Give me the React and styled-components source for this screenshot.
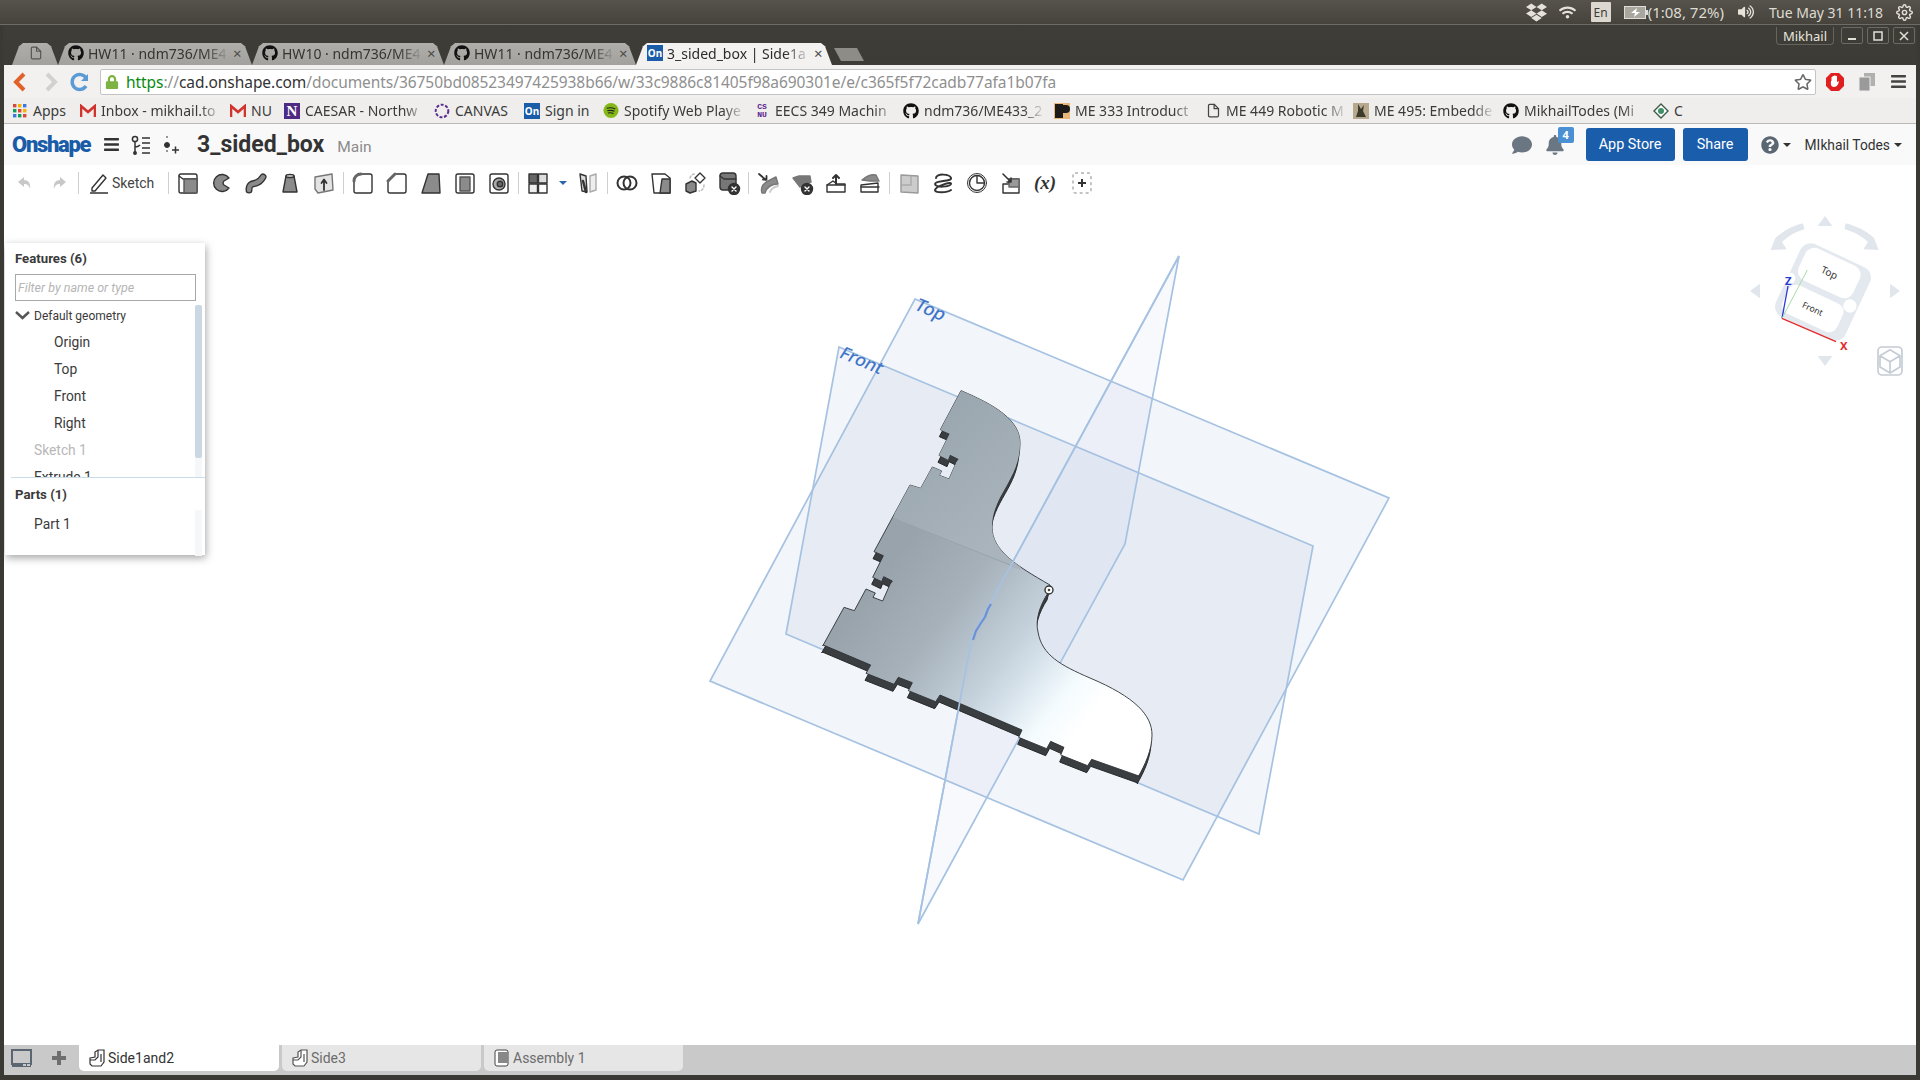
import React from 'react';
import styled, { createGlobalStyle } from 'styled-components';
import { FaGithub, FaDropbox, FaWifi, FaVolumeUp, FaRegStar, FaBars, FaBell, FaComment, FaQuestionCircle, FaLock } from 'react-icons/fa';
import { FiFile, FiSettings } from 'react-icons/fi';

const Global = createGlobalStyle`
  html, body { margin: 0; padding: 0; background: #3c3b37; }
  * { box-sizing: border-box; }
`;

const Screen = styled.div`
  width: 1920px;
  height: 1080px;
  display: flex;
  flex-direction: column;
  overflow: hidden;
  background: #3a3934;
  font-family: "Noto Sans", "Open Sans", sans-serif;
`;

/* ---- desktop top bar ---- */
const OsBar = styled.div`
  height: 25px;
  flex: none;
  display: flex;
  align-items: center;
  justify-content: flex-end;
  background: linear-gradient(#55534b, #45433c);
  border-bottom: 1px solid #6e6c64;
  color: #dfdbd2;
  font-size: 14px;
  padding-right: 6px;
`;
const OsIcon = styled.span`
  display: flex;
  align-items: center;
  justify-content: center;
  width: ${p => p.$w}px;
  margin-left: ${p => p.$ml || 0}px;
  color: #e6e2da;
`;
const LangBox = styled.span`
  width: 20px;
  height: 20px;
  margin-left: 12px;
  background: #dcd8cf;
  color: #3c3b37;
  font-size: 12px;
  display: flex;
  align-items: center;
  justify-content: center;
  border-radius: 1px;
`;
const OsText = styled.span`
  margin-left: ${p => p.$ml}px;
  font-size: ${p => p.$size || 14}px;
  white-space: nowrap;
`;

/* ---- window title + tabs ---- */
const TitleArea = styled.div`
  height: 40px;
  flex: none;
  position: relative;
  display: flex;
  align-items: flex-end;
  padding-left: 9px;
  background: linear-gradient(#3e3d38, #3c3b36);
  margin: 0 3px;
`;
const Tab = styled.div`
  width: ${p => p.$w}px;
  height: 22px;
  flex: none;
  display: flex;
  align-items: center;
  padding-left: ${p => p.$pl || 12}px;
  padding-bottom: 2px;
  gap: 4px;
  font-size: 14px;
  color: ${p => (p.$active ? '#2b2b2b' : '#35342f')};
  background: ${p => (p.$active ? '#f3f2f0' : 'linear-gradient(#b0aeaa, #a3a19d)')};
  clip-path: polygon(0 100%, 7px 15%, 11px 0, calc(100% - 11px) 0, calc(100% - 7px) 15%, 100% 100%);
`;
const NewTab = styled.div`
  width: 30px;
  height: 13px;
  margin: 0 0 4px 2px;
  flex: none;
  background: #8e8c87;
  clip-path: polygon(0 0, calc(100% - 7px) 0, 100% 100%, 7px 100%);
`;
const Fade = styled.span`
  width: ${p => p.$w}px;
  white-space: nowrap;
  flex: none;
  -webkit-mask-image: linear-gradient(90deg, #000 84%, rgba(0, 0, 0, 0.15) 100%);
  mask-image: linear-gradient(90deg, #000 84%, rgba(0, 0, 0, 0.15) 100%);
`;
const TabClose = styled.span`
  font-size: 15px;
  color: #4c4b47;
  margin-left: 3px;
`;
const WinControls = styled.div`
  position: absolute;
  top: 2px;
  right: 2px;
  display: flex;
  gap: 4px;
`;
const UserChip = styled.div`
  width: 58px;
  height: 18px;
  margin-right: 3px;
  border: 1px solid #66645c;
  border-top: none;
  border-radius: 0 0 4px 4px;
  color: #e8e5dd;
  font-size: 13px;
  display: flex;
  align-items: center;
  justify-content: center;
`;
const WinButton = styled.div`
  width: 22px;
  height: 17px;
  border: 1px solid #6c6a62;
  border-radius: 2px;
  color: #e2dfd7;
  display: flex;
  align-items: center;
  justify-content: center;
`;

/* ---- browser ---- */
const Browser = styled.div`
  flex: 1;
  min-height: 0;
  display: flex;
  flex-direction: column;
  margin: 0 4px 5px;
  background: #fff;
`;
const ChromeBar = styled.div`
  height: 33px;
  flex: none;
  display: flex;
  align-items: center;
  background: #f2f1ef;
  position: relative;
`;
const NavSlot = styled.div`
  width: ${p => p.$w}px;
  flex: none;
  display: flex;
  align-items: center;
  justify-content: center;
`;
const Address = styled.div`
  width: 1716px;
  height: 26px;
  flex: none;
  margin-left: 7px;
  background: #fff;
  border: 1px solid #c4c4c4;
  border-radius: 2px;
  display: flex;
  align-items: center;
  font-family: "Noto Sans", sans-serif;
  font-size: 15.5px;
  letter-spacing: -0.06px;
  position: relative;
`;
const Url = styled.span`
  margin-left: 3px;
  color: #8f8f8f;
  white-space: nowrap;
`;
const UrlGreen = styled.span`
  color: #0a8a12;
`;
const UrlHost = styled.span`
  color: #333;
`;
const StarSlot = styled.div`
  position: absolute;
  right: 3px;
  top: 3px;
  color: #666;
  display: flex;
`;
const LockSlot = styled.div`
  width: 22px;
  flex: none;
  display: flex;
  justify-content: center;
  color: #7cb342;
`;
const Bookmarks = styled.div`
  height: 26px;
  flex: none;
  display: flex;
  align-items: center;
  background: #efeeec;
  border-bottom: 1px solid #b9b9b7;
  padding-left: 8px;
`;
const Bookmark = styled.div`
  width: ${p => p.$w}px;
  flex: none;
  display: flex;
  align-items: center;
  gap: 5px;
  font-size: 14px;
  color: #3b3b3b;
`;
const FavSlot = styled.span`
  width: 16px;
  height: 16px;
  flex: none;
  display: flex;
  align-items: center;
  justify-content: center;
`;
const OnBadge = styled.span`
  width: 16px;
  height: 16px;
  background: #1a5ca8;
  color: #fff;
  font-size: 10px;
  font-weight: 700;
  display: flex;
  align-items: center;
  justify-content: center;
`;
const NBadge = styled.span`
  width: 16px;
  height: 16px;
  background: #4e2a84;
  color: #fff;
  font-family: "Liberation Serif", serif;
  font-size: 15px;
  font-weight: 700;
  line-height: 16px;
  text-align: center;
`;
const CsBadge = styled.span`
  font-family: "Liberation Mono", monospace;
  font-size: 8px;
  line-height: 8px;
  font-weight: 700;
  color: #5a1f8c;
  text-align: center;
`;

/* ---- onshape header ---- */
const Header = styled.div`
  height: 41px;
  flex: none;
  display: flex;
  align-items: center;
  background: #f9f9f9;
  padding-left: 8px;
`;
const Logo = styled.span`
  width: 84px;
  flex: none;
  font-family: "Roboto", sans-serif;
  font-weight: 900;
  font-size: 22px;
  letter-spacing: -1.3px;
  color: #1a5ca8;
`;
const HeadIcon = styled.span`
  width: 30px;
  flex: none;
  display: flex;
  justify-content: center;
  color: #333;
`;
const DocTitle = styled.span`
  margin-left: 11px;
  font-family: "Roboto", sans-serif;
  font-weight: 700;
  font-size: 23px;
  color: #333;
`;
const Branch = styled.span`
  margin-left: 13px;
  font-family: "Roboto", sans-serif;
  font-size: 15.5px;
  color: #8b8b8b;
  padding-top: 5px;
`;
const HeadRight = styled.div`
  margin-left: auto;
  display: flex;
  align-items: center;
  height: 100%;
`;
const Bell = styled.span`
  position: relative;
  display: flex;
  color: #6a7682;
  margin-left: 13px;
`;
const BellBadge = styled.span`
  position: absolute;
  top: -8px;
  left: 13px;
  width: 16px;
  height: 16px;
  background: #4a90d2;
  border-radius: 2px;
  color: #fff;
  font-size: 11px;
  font-weight: 700;
  display: flex;
  align-items: center;
  justify-content: center;
`;
const Blue = styled.div`
  width: ${p => p.$w}px;
  height: 33px;
  margin-left: ${p => p.$ml}px;
  background: #1a5dab;
  border-radius: 3px;
  color: #fff;
  font-family: "Roboto", sans-serif;
  font-size: 14.4px;
  display: flex;
  align-items: center;
  justify-content: center;
`;
const Caret = styled.span`
  width: 0;
  height: 0;
  margin-left: ${p => p.$ml}px;
  border-left: 4px solid transparent;
  border-right: 4px solid transparent;
  border-top: 4px solid ${p => p.$c || '#333'};
`;
const UserName = styled.span`
  margin-left: 14px;
  font-family: "Roboto", sans-serif;
  font-size: 13.8px;
  color: #333;
`;

/* ---- toolbar ---- */
const Toolbar = styled.div`
  height: 36px;
  flex: none;
  display: flex;
  align-items: center;
  background: #fff;
  padding-left: 4px;
`;
const ToolButton = styled.div`
  width: ${p => p.$w || 34}px;
  height: 30px;
  flex: none;
  display: flex;
  align-items: center;
  justify-content: center;
`;
const ToolSep = styled.div`
  width: 1px;
  height: 22px;
  margin: 0 2px;
  flex: none;
  background: #cfcfcf;
`;
const SketchLabel = styled.div`
  display: flex;
  width: 85px;
  padding-left: 8px;
  flex: none;
  align-items: center;
  gap: 3px;
  font-family: "Roboto", sans-serif;
  font-size: 14px;
  color: #444;
`;
const VarLabel = styled.span`
  font-family: "Liberation Serif", serif;
  font-weight: 700;
  font-size: 19px;
  color: #333;
`;

/* ---- viewport ---- */
const Viewport = styled.div`
  flex: 1;
  min-height: 0;
  position: relative;
  background: #fff;
  overflow: hidden;
`;
const Scene = styled.svg`
  position: absolute;
  inset: 0;
`;
const CubeNav = styled.svg`
  position: absolute;
  top: -1px;
  right: -4px;
`;
const Panel = styled.div`
  position: absolute;
  left: 1px;
  top: 42px;
  width: 200px;
  height: 312px;
  background: #fff;
  box-shadow: 1px 3px 8px rgba(0, 0, 0, 0.35);
  font-family: "Roboto", sans-serif;
  color: #333;
  display: flex;
  flex-direction: column;
`;
const PanelHead = styled.div`
  font-size: 13.2px;
  font-weight: 700;
  color: #3a3a3a;
  height: ${p => p.$h}px;
  padding: ${p => p.$pt}px 0 0 10px;
  flex: none;
`;
const Filter = styled.div`
  width: 181px;
  height: 27px;
  margin-left: 10px;
  flex: none;
  border: 1px solid #a8a8a8;
  font-size: 12.5px;
  font-style: italic;
  color: #b5b5b5;
  display: flex;
  align-items: center;
  padding-left: 2px;
`;
const List = styled.div`
  position: relative;
  height: ${p => p.$h}px;
  flex: none;
  overflow: hidden;
  border-bottom: ${p => (p.$line ? '1px solid #c8dcea' : 'none')};
  margin-left: ${p => (p.$line ? 6 : 0)}px;
`;
const Track = styled.div`
  position: absolute;
  right: 3px;
  top: ${p => p.$top}px;
  bottom: 0;
  width: 7px;
  background: #f5f7f9;
`;
const Thumb = styled.div`
  height: 153px;
  width: 7px;
  background: #cbd8e4;
  border-radius: 2px;
`;
const Row = styled.div`
  height: 27px;
  display: flex;
  align-items: center;
  padding-left: ${p => p.$indent}px;
  padding-top: ${p => p.$pt || 0}px;
  font-size: ${p => p.$size || 13.8}px;
  color: ${p => (p.$muted ? '#b8b8b8' : '#3a3a3a')};
`;
const Chevron = styled.svg`
  margin-right: 4px;
  flex: none;
`;

/* ---- bottom tabs ---- */
const BottomBar = styled.div`
  height: 30px;
  flex: none;
  display: flex;
  background: #c9c9c9;
  padding-bottom: 4px;
  font-family: "Roboto", sans-serif;
`;
const BottomTool = styled.div`
  width: ${p => p.$w}px;
  flex: none;
  display: flex;
  align-items: center;
  justify-content: center;
`;
const SheetTab = styled.div`
  width: ${p => p.$w}px;
  margin-right: 3px;
  flex: none;
  display: flex;
  align-items: center;
  gap: 3px;
  padding-left: 10px;
  font-size: 14px;
  border-radius: 0 0 5px 5px;
  color: ${p => (p.$active ? '#333' : '#6c6c6c')};
  background: ${p => (p.$active ? '#fff' : '#e6e6e6')};
`;

/* ---- small drawings ---- */
const Gh = ({ size = 16 }) => <FaGithub size={size} color="#111" />;

const OnLogo = () => <OnBadge>On</OnBadge>;

const GmailM = () => (
  <svg width="16" height="14" viewBox="0 0 16 14">
    <path d="M1 13V2l7 6 7-6v11" fill="none" stroke="#d0342c" strokeWidth="2.6" />
  </svg>
);

const CanvasRing = () => (
  <svg width="16" height="16" viewBox="0 0 16 16">
    <circle cx="8" cy="8" r="6.3" fill="none" stroke="#5c2d91" strokeWidth="2" strokeDasharray="3 1.6" />
  </svg>
);

const SpotifyDot = () => (
  <svg width="17" height="17" viewBox="0 0 17 17">
    <circle cx="8.5" cy="8.5" r="8" fill="#84b818" />
    <path d="M4 6.2c3-1 6-.8 9 .7M4.6 8.8c2.6-.8 5-.6 7.6.6M5.2 11.2c2-.6 4-.4 6 .6" fill="none" stroke="#222" strokeWidth="1.2" />
  </svg>
);

const AppsGrid = () => (
  <svg width="14" height="14" viewBox="0 0 14 14">
    {[0, 1, 2].map(r => [0, 1, 2].map(c => (
      <rect key={`${r}${c}`} x={c * 5} y={r * 5} width="3.4" height="3.4"
        fill={['#d9483b', '#f4b400', '#3b78e7', '#0f9d58', '#d9483b', '#f4b400', '#3b78e7', '#0f9d58', '#d9483b'][r * 3 + c]} />
    )))}
  </svg>
);

const Me333 = () => (
  <svg width="16" height="16" viewBox="0 0 16 16">
    <rect width="16" height="16" fill="#e9b777" />
    <rect x="1" y="1" width="8" height="14" fill="#1d1b19" />
    <path d="M9 2h3a4 4 0 010 8H9z" fill="#1d1b19" />
  </svg>
);

const Me495 = () => (
  <svg width="16" height="16" viewBox="0 0 16 16">
    <rect width="16" height="16" fill="#b6a98e" />
    <path d="M5 1l3 5 3-4-1 6 3 6H3l2-6z" fill="#3d3a2c" />
  </svg>
);

const Diamond = () => (
  <svg width="16" height="16" viewBox="0 0 16 16">
    <path d="M8 1l7 7-7 7-7-7z" fill="#fff" stroke="#3c5a48" strokeWidth="1.4" />
    <circle cx="8" cy="8" r="3" fill="#3f9268" />
  </svg>
);

const I = ({ children, size = 24 }) => (
  <svg width={size} height={size} viewBox="0 0 24 24" fill="none" stroke="#333" strokeWidth="1.4" strokeLinejoin="round" strokeLinecap="round">
    {children}
  </svg>
);
const G = '#8b8b8b';

const tools = {
  extrude: <I><rect x="3" y="3" width="18" height="19" rx="2" fill="#fff" /><path d="M3 5l4 3h14" /><rect x="8" y="8" width="13" height="14" fill={G} stroke="#555" /></I>,
  revolve: <I><path d="M19 7a8.5 8.5 0 100 10l-5-3a2.6 2.6 0 010-4z" fill={G} /></I>,
  sweep: <I><path d="M5 19c0-6 3-6 7-7s5-3 7-6" stroke="#333" strokeWidth="7" /><path d="M5 19c0-6 3-6 7-7s5-3 7-6" stroke={G} strokeWidth="4.4" /></I>,
  loft: <I><path d="M8 5L5 21h14L16 5z" fill={G} /><ellipse cx="12" cy="5" rx="4" ry="1.6" fill="#bbb" /></I>,
  enclose: <I><path d="M3 6l17-3 1 16-15 3-3-4z" fill="#e3e3e3" stroke="#777" /><path d="M12 19V9M9.5 12L12 8.5l2.500 3.500" strokeWidth="1.800" /></I>,
  fillet: <I><path d="M10 3h9a2 2 0 012 2v15a2 2 0 01-2 2H5a2 2 0 01-2-2V10a7 7 0 017-7z" fill="#fff" /><path d="M3 10a7 7 0 017-7" strokeWidth="3" stroke="#666" /></I>,
  chamfer: <I><path d="M10 3h9a2 2 0 012 2v15a2 2 0 01-2 2H5a2 2 0 01-2-2V10z" fill="#fff" /><path d="M3 10l7-7" strokeWidth="3" stroke="#666" /></I>,
  draft: <I><path d="M9 3h11l1 19H3z" fill={G} /></I>,
  shell: <I><rect x="3" y="3" width="18" height="19" rx="2" fill="#fff" /><rect x="7" y="6" width="10" height="14" fill={G} stroke="#555" /></I>,
  hole: <I><rect x="3" y="3" width="18" height="19" rx="2" fill="#fff" /><circle cx="12" cy="13" r="6" fill="#aaa" /><circle cx="13" cy="13" r="2.800" fill="#666" /></I>,
  pattern: <I><rect x="3" y="3" width="8.500" height="9" fill="#666" /><rect x="12.500" y="3" width="8.500" height="9" fill="#ddd" /><rect x="3" y="13" width="8.500" height="9" fill="#eee" /><rect x="12.500" y="13" width="8.500" height="9" fill="#fff" /></I>,
  mirror: <I><path d="M14 5l6-2v16l-6 2z" fill="#eee" stroke="#aaa" /><path d="M4 3l6 2 1 16-5-1z" fill="#ddd" /><path d="M7 10l3 11" strokeWidth="2.500" /></I>,
  boolean: <I><circle cx="9" cy="12" r="6.500" strokeWidth="2" /><circle cx="15" cy="12" r="6.500" strokeWidth="2" /></I>,
  split: <I><path d="M3 3h13l5 4v15H5z" fill="#fff" /><path d="M13 8h8v14h-10z" fill={G} /></I>,
  transform: <I><path d="M3 13l6-3 4 2v8l-6 2-4-2z" fill="#888" /><path d="M17 2l5 5-5 5-5-5z" fill="#fff" /><path d="M7 7c1-3 3-4 5-4M21 14c0 3-2 6-5 6" stroke="#bbb" strokeDasharray="2 2" /></I>,
  delPart: <I><rect x="3" y="2" width="16" height="17" rx="3" fill="#777" /><path d="M3 5l4 3h12" /><circle cx="17" cy="18" r="5.500" fill="#333" /><path d="M15 16l4 4M19 16l-4 4" stroke="#fff" /></I>,
  modify: <I><path d="M6 22c-2-6 2-11 8-13l6-3 2 7c-6 0-11 3-13 9z" fill={G} stroke="#777" /><path d="M3 3l7 6M7 8.500h3.500V5" strokeWidth="1.800" /><path d="M14 21c1-3 4-5 8-6" stroke="#ccc" strokeWidth="2" /></I>,
  delFace: <I><path d="M3 7l6-2 6 0 5 0 1 6-6 2-5 3z" fill="#777" stroke="#777" /><circle cx="17" cy="18" r="5.500" fill="#333" /><path d="M15 16l4 4M19 16l-4 4" stroke="#fff" /></I>,
  moveFace: <I><path d="M3 14l6-4 4 3h8v8H3z" fill="#fff" /><path d="M3 14h18" /><path d="M12 13V4M9 7l3-3 3 3" strokeWidth="2" /></I>,
  replace: <I><path d="M3 14l17-2v9H3z" fill="#fff" /><path d="M3 16h18" /><path d="M4 9c4-3 8-6 14-5l3 6-9 0z" fill={G} stroke="#777" /></I>,
  plane: <I><path d="M4 4l17 1v17L4 21z" fill="#ccc" stroke="#999" /><path d="M14 5v9l-10 0" stroke="#aaa" /></I>,
  helix: <I><path d="M5 7c0-5 14-4 15 0S4 9 4 13s15 3 16 0S5 15 4 19c0 3 12 3 16 0" strokeWidth="2" /></I>,
  clock: <I><circle cx="12" cy="12" r="9.500" strokeWidth="1" /><circle cx="12" cy="12" r="7.500" /><path d="M12 5v7h7" /></I>,
  wrap: <I><path d="M4 13h6V8h10v14H4z" fill="#fff" /><path d="M10 8h10v8H10z" fill="#999" stroke="#666" /><path d="M4 3l8 8M8 11h4V7" strokeWidth="1.600" /></I>,
};

const grp1 = ['extrude', 'revolve', 'sweep', 'loft', 'enclose'];
const grp2 = ['fillet', 'chamfer', 'draft', 'shell', 'hole'];
const grp4 = ['boolean', 'split', 'transform', 'delPart'];
const grp5 = ['modify', 'delFace', 'moveFace', 'replace'];
const grp6 = ['plane', 'helix', 'clock', 'wrap'];

const ToolGroup = ({ names }) => names.map(n => <ToolButton key={n}>{tools[n]}</ToolButton>);

const bookmarks = [
  { w: 68, icon: <AppsGrid />, text: 'Apps' },
  { w: 150, icon: <GmailM />, text: 'Inbox - mikhail.to', fade: 118 },
  { w: 54, icon: <GmailM />, text: 'NU' },
  { w: 150, icon: <NBadge>N</NBadge>, text: 'CAESAR - Northw', fade: 118 },
  { w: 90, icon: <CanvasRing />, text: 'CANVAS' },
  { w: 79, icon: <OnLogo />, text: 'Sign in' },
  { w: 151, icon: <SpotifyDot />, text: 'Spotify Web Playe', fade: 118 },
  { w: 149, icon: <CsBadge>CS<br />NU</CsBadge>, text: 'EECS 349 Machin', fade: 118 },
  { w: 151, icon: <Gh />, text: 'ndm736/ME433_2', fade: 118 },
  { w: 151, icon: <Me333 />, text: 'ME 333 Introduct', fade: 118 },
  { w: 148, icon: <FiFile size={15} color="#444" />, text: 'ME 449 Robotic M', fade: 118 },
  { w: 150, icon: <Me495 />, text: 'ME 495: Embedde', fade: 118 },
  { w: 150, icon: <Gh />, text: 'MikhailTodes (Mi', fade: 118 },
  { w: 40, icon: <Diamond />, text: 'C' },
];

const tabs = [
  { w: 194, text: 'HW11 · ndm736/ME4' },
  { w: 192, text: 'HW10 · ndm736/ME4' },
  { w: 192, text: 'HW11 · ndm736/ME4' },
];

/* ---- the part in the viewport, coordinates are page pixels ---- */
const z7 = ([x, y]) => `${800 + x / 3},${370 + y / 3}`;
const z8 = ([x, y]) => `${820 + x / 3},${600 + y / 3}`;

const leftEdge = [[68, 828], [132, 712], [163, 722], [198, 657], [226, 669], [219, 682], [248, 693], [270, 643], [277, 633], [251, 620], [245, 635], [218, 622], [250, 557], [222, 545], [330, 345], [362, 355], [397, 291], [425, 303], [418, 316], [447, 327], [469, 277], [476, 267], [450, 254], [444, 269], [417, 256], [449, 191], [421, 179], [483, 62]];
const bottomEdge = [[957, 528], [815, 478], [803, 497], [722, 465], [732, 442], [692, 424], [680, 446], [596, 412], [606, 390], [360, 285], [347, 305], [265, 272], [277, 248], [235, 232], [222, 253], [138, 220], [152, 195], [10, 135]];

const facePath = `M${leftEdge.map(z7).join(' L')} C995,405 1020,420 1020,443 C1020,480 992,495 992,527 C992,550 1015,565 1050,585 L1048,593 C1040,605 1035,620 1038,632 C1042,655 1060,665 1090,678 C1135,697 1152,715 1152,735 C1152,750 1145,765 1138,777 L${bottomEdge.map(z8).join(' L')} Z`;

const PlaneShape = ({ points, fill = 'rgba(170,190,215,0.15)' }) => (
  <polygon points={points} fill={fill} stroke="#a6c2e2" strokeWidth="1.700" />
);

const PartScene = () => (
  <Scene width="1912" height="844" viewBox="4 201 1912 844">
    <defs>
      <linearGradient id="faceFill" gradientUnits="userSpaceOnUse" x1="885" y1="570" x2="1085" y2="725">
        <stop offset="0" stopColor="#98a3ac" />
        <stop offset="0.3" stopColor="#a6b1ba" />
        <stop offset="0.59" stopColor="#c5d2dc" />
        <stop offset="0.74" stopColor="#dde8f0" />
        <stop offset="0.86" stopColor="#f4fbfe" />
        <stop offset="1" stopColor="#fff" />
      </linearGradient>
      <linearGradient id="upperFill" gradientUnits="userSpaceOnUse" x1="900" y1="420" x2="1000" y2="540">
        <stop offset="0" stopColor="#99a5ae" />
        <stop offset="1" stopColor="#a9b4bc" />
      </linearGradient>
      <clipPath id="faceClip"><path d={facePath} /></clipPath>
    </defs>
    <PlaneShape points="915,299 1389,498 1183,880 710,681" />
    <PlaneShape points="839,347 1313,546 1259,834 786,634" />
    <PlaneShape points="1179,256 1125,544 918,924 972,637" fill="rgba(170,180,225,0.08)" />
    <text transform="translate(913,309) rotate(22.800) skewX(-10)" fontFamily="Noto Sans, sans-serif" fontWeight="500" fontSize="18" fill="#3f74c8">Top</text>
    <text transform="translate(838,357) rotate(22.800) skewX(-10)" fontFamily="Noto Sans, sans-serif" fontWeight="500" fontSize="17.500" fill="#3f74c8">Front</text>
    <path d={facePath} transform="translate(-1,7)" fill="#3b3e41" stroke="#26282a" strokeWidth="1" />
    <path d={facePath} fill="url(#faceFill)" stroke="#2f3235" strokeWidth="0.900" />
    <g clipPath="url(#faceClip)">
      <polygon points="950,340 1060,340 1020,570 893,518" fill="url(#upperFill)" />
      <path d="M893,518L1010,565" stroke="#97a3ad" strokeWidth="1" />
    </g>
    <path d="M1179,256L972,637L918,924" fill="none" stroke="#a6c2e2" strokeWidth="1.700" />
    <path d="M973,640l3,-9l5,-8l4,-6l3,-8l3,-5" fill="none" stroke="#5b86d8" strokeWidth="2.200" opacity="0.8" />
    <circle cx="1049" cy="590" r="4" fill="#fff" stroke="#333" strokeWidth="1.400" />
    <circle cx="1049" cy="590" r="1.300" fill="#444" />
  </Scene>
);

const CubeWidget = () => (
  <CubeNav width="200" height="190" viewBox="0 0 600 570">
    <g fill="#e0e6ec">
      <path d="M315 48l22 30h-44zM315 498l22-30h-44zM90 273l30-22v44zM540 273l-30-22v44z" />
      <path d="M152 150l14-36c24-22 52-36 82-44l6 18c-28 8-48 20-68 38l14 22z" />
      <path d="M476 150l-14-36c-24-22-52-36-86-44l-2 18c28 8 50 20 70 38l-14 22z" />
    </g>
    <g transform="translate(-6,6) rotate(25 315 270)">
      <rect x="200" y="150" width="230" height="240" rx="34" fill="#e4e9ef" />
      <rect x="218" y="158" width="180" height="105" rx="30" fill="#fff" />
      <rect x="218" y="282" width="180" height="92" rx="26" fill="#fff" />
      <circle cx="406" cy="274" r="20" fill="#fff" />
      <circle cx="208" cy="274" r="16" fill="#fff" />
      <text x="308" y="220" textAnchor="middle" fontFamily="Noto Sans, sans-serif" fontSize="30" fill="#333">Top</text>
      <text x="308" y="338" textAnchor="middle" fontFamily="Noto Sans, sans-serif" fontSize="26" fill="#333">Front</text>
    </g>
    <path d="M186 355L204 258" stroke="#2d3bd6" strokeWidth="4" />
    <path d="M186 355L262 210" stroke="#a7dca9" strokeWidth="3" />
    <path d="M186 355L348 425" stroke="#e02c2c" strokeWidth="4" />
    <text x="195" y="254" fontFamily="Noto Sans, sans-serif" fontWeight="700" fontSize="34" fill="#2d3bd6">Z</text>
    <text x="360" y="450" fontFamily="Noto Sans, sans-serif" fontWeight="700" fontSize="34" fill="#e02c2c">X</text>
    <g fill="none" stroke="#c5ccd5" strokeWidth="5" strokeLinejoin="round">
      <rect x="474" y="441" width="72" height="84" rx="12" />
      <path d="M510 449l30 18v34l-30 18-30-18v-34zM480 467l30 18 30-18M510 485v34" />
    </g>
  </CubeNav>
);

const PartGlyph = ({ muted }) => (
  <svg width="16" height="18" viewBox="0 0 16 18" fill="#fff" stroke={muted ? '#555' : '#333'} strokeWidth="1.200">
    <path d="M1 9l5-1V3l3-2h6v12l-3 4H3l-2-2z" />
    <path d="M9 1v7L6 11H1M12 13V5" fill="none" />
  </svg>
);

const App = () => (
  <Screen>
    <Global />
    <OsBar>
      <OsIcon $w={24}><FaDropbox size={21} /></OsIcon>
      <OsIcon $w={22} $ml={8}><FaWifi size={17} /></OsIcon>
      <LangBox>En</LangBox>
      <OsIcon $w={24} $ml={13}>
        <svg width="24" height="13" viewBox="0 0 24 13">
          <rect x="0.500" y="0.500" width="21" height="12" fill="#a9a69e" stroke="#ddd" />
          <rect x="22" y="4" width="2" height="5" fill="#ddd" />
          <path d="M13 2L7 7h4l-1 4 6-5h-4z" fill="#fff" />
        </svg>
      </OsIcon>
      <OsText $ml={0} $size={15}>(1:08, 72%)</OsText>
      <OsIcon $w={20} $ml={12}><FaVolumeUp size={16} /></OsIcon>
      <OsText $ml={13}>Tue May 31 11:18</OsText>
      <OsIcon $w={20} $ml={11}><FiSettings size={17} /></OsIcon>
    </OsBar>
    <TitleArea>
      <Tab $w={46} $pl={17}><FiFile size={14} color="#555" /></Tab>
      {tabs.map((t, i) => (
        <Tab key={i} $w={t.w} $pl={10}>
          <Gh />
          <Fade $w={138}>{t.text}</Fade>
          <TabClose>×</TabClose>
        </Tab>
      ))}
      <Tab $w={196} $active $pl={11}>
        <OnLogo />
        <Fade $w={140}>3_sided_box | Side1a</Fade>
        <TabClose>×</TabClose>
      </Tab>
      <NewTab />
      <WinControls>
        <UserChip>Mikhail</UserChip>
        <WinButton><svg width="10" height="10"><path d="M1 8h8" stroke="#e2dfd7" strokeWidth="2" /></svg></WinButton>
        <WinButton><svg width="10" height="10"><rect x="1" y="1" width="8" height="8" fill="none" stroke="#e2dfd7" strokeWidth="1.500" /></svg></WinButton>
        <WinButton><svg width="10" height="10"><path d="M1 1l8 8M9 1l-8 8" stroke="#e2dfd7" strokeWidth="1.500" /></svg></WinButton>
      </WinControls>
    </TitleArea>
    <Browser>
      <ChromeBar>
        <NavSlot $w={32}>
          <svg width="14" height="20" viewBox="0 0 14 20"><path d="M11 2L3 10l8 8" fill="none" stroke="#e0622a" strokeWidth="4" /></svg>
        </NavSlot>
        <NavSlot $w={30}>
          <svg width="14" height="20" viewBox="0 0 14 20"><path d="M3 2l8 8-8 8" fill="none" stroke="#d3d1ce" strokeWidth="4" /></svg>
        </NavSlot>
        <NavSlot $w={27}>
          <svg width="20" height="20" viewBox="0 0 20 20">
            <path d="M16 6a7.500 7.500 0 100 8" fill="none" stroke="#5b9bd5" strokeWidth="3.400" />
            <path d="M18 2v7h-7z" fill="#5b9bd5" />
          </svg>
        </NavSlot>
        <Address>
          <LockSlot><FaLock size={14} /></LockSlot>
          <Url>
            <UrlGreen>https</UrlGreen>://<UrlHost>cad.onshape.com</UrlHost>/documents/36750bd08523497425938b66/w/33c9886c81405f98a690301e/e/c365f5f72cadb77afa1b07fa
          </Url>
          <StarSlot><FaRegStar size={18} /></StarSlot>
        </Address>
        <NavSlot $w={38}>
          <svg width="20" height="20" viewBox="0 0 20 20">
            <path d="M6 1h8l5 5v8l-5 5H6l-5-5V6z" fill="#e02020" />
            <path d="M6.500 9V5h1v4-5h1.500v5-5.500h1.500V9 4h1.500v6c1 0 1.500-1 2-1-.5 3-2 6-5 6-3 0-3.500-3-3-6z" fill="#fff" />
          </svg>
        </NavSlot>
        <NavSlot $w={26}>
          <svg width="18" height="20" viewBox="0 0 18 20"><rect x="6" y="1" width="11" height="13" fill="#b0b0b0" /><rect x="1" y="5" width="11" height="14" fill="#9a9a9a" stroke="#eee" /></svg>
        </NavSlot>
        <NavSlot $w={36}><FaBars size={17} color="#444" /></NavSlot>
      </ChromeBar>
      <Bookmarks>
        {bookmarks.map(b => (
          <Bookmark key={b.text} $w={b.w}>
            <FavSlot>{b.icon}</FavSlot>
            {b.fade ? <Fade $w={b.fade}>{b.text}</Fade> : <span>{b.text}</span>}
          </Bookmark>
        ))}
      </Bookmarks>
      <Header>
        <Logo>Onshape</Logo>
        <HeadIcon><FaBars size={17} /></HeadIcon>
        <HeadIcon>
          <svg width="20" height="20" viewBox="0 0 20 20" fill="none" stroke="#333" strokeWidth="1.500">
            <circle cx="4" cy="4" r="2.600" /><path d="M4 7v10M4 12c3 0 4-1 5-2" /><circle cx="4" cy="18" r="1.200" fill="#333" />
            <path d="M11 3h8M11 8h8M11 13h8M11 18h8" />
          </svg>
        </HeadIcon>
        <HeadIcon>
          <svg width="20" height="20" viewBox="0 0 20 20" fill="#333" stroke="#333">
            <circle cx="6" cy="10" r="2.500" /><path d="M6 1v4M6 15v4" strokeDasharray="2 2" fill="none" /><path d="M11 15h7M14.500 11.500v7" fill="none" strokeWidth="1.500" />
          </svg>
        </HeadIcon>
        <DocTitle>3_sided_box</DocTitle>
        <Branch>Main</Branch>
        <HeadRight>
          <FaComment size={20} color="#6a7682" />
          <Bell><FaBell size={20} /><BellBadge>4</BellBadge></Bell>
          <Blue $w={89} $ml={21}>App Store</Blue>
          <Blue $w={65} $ml={8}>Share</Blue>
          <OsIcon $w={20} $ml={12}><FaQuestionCircle size={18} color="#5a6672" /></OsIcon>
          <Caret $ml={3} />
          <UserName>MIkhail Todes</UserName>
          <Caret $ml={4} />
          <OsIcon $w={14} />
        </HeadRight>
      </Header>
      <Toolbar>
        <ToolButton>
          <svg width="16" height="16" viewBox="0 0 16 16"><path d="M7 2L1 7l6 5V9c3 0 5 1 6 5 1-6-2-9-6-9z" fill="#c8c8c8" /></svg>
        </ToolButton>
        <ToolButton>
          <svg width="16" height="16" viewBox="0 0 16 16"><path d="M9 2l6 5-6 5V9c-3 0-5 1-6 5-1-6 2-9 6-9z" fill="#c8c8c8" /></svg>
        </ToolButton>
        <ToolSep />
        <SketchLabel>
          <svg width="20" height="22" viewBox="0 0 20 22" fill="none" stroke="#333" strokeWidth="1.400" strokeLinejoin="round">
            <path d="M3 16L14 3l3 3L6 19H3zM1 21h18" />
          </svg>
          Sketch
        </SketchLabel>
        <ToolSep />
        <ToolGroup names={grp1} />
        <ToolSep />
        <ToolGroup names={grp2} />
        <ToolSep />
        <ToolButton>{tools.pattern}</ToolButton>
        <ToolButton $w={16}><Caret $ml={0} $c="#2a66b0" /></ToolButton>
        <ToolButton>{tools.mirror}</ToolButton>
        <ToolSep />
        <ToolGroup names={grp4} />
        <ToolSep />
        <ToolGroup names={grp5} />
        <ToolSep />
        <ToolGroup names={grp6} />
        <ToolButton><VarLabel><i>(x)</i></VarLabel></ToolButton>
        <ToolButton $w={40}>
          <svg width="20" height="22" viewBox="0 0 20 22" fill="none" stroke="#888" strokeDasharray="3 3">
            <rect x="1" y="1" width="18" height="20" rx="2" />
            <path d="M10 7v8M6 11h8" stroke="#333" strokeWidth="2" strokeDasharray="none" />
          </svg>
        </ToolButton>
      </Toolbar>
      <Viewport>
        <PartScene />
        <CubeWidget />
        <Panel>
          <PanelHead $h={31} $pt={8}>Features (6)</PanelHead>
          <Filter>Filter by name or type</Filter>
          <List $h={177} $line>
            <Track $top={4}><Thumb /></Track>
            <Row $indent={4} $size={12} $pt={2}>
              <Chevron width="15" height="9" viewBox="0 0 15 9">
                <path d="M1 1l6.500 6L14 1" fill="none" stroke="#555" strokeWidth="2.400" />
              </Chevron>
              Default geometry
            </Row>
            <Row $indent={43}>Origin</Row>
            <Row $indent={43}>Top</Row>
            <Row $indent={43}>Front</Row>
            <Row $indent={43}>Right</Row>
            <Row $indent={23} $muted>Sketch 1</Row>
            <Row $indent={23}>Extrude 1</Row>
          </List>
          <PanelHead $h={32} $pt={9}>Parts (1)</PanelHead>
          <List $h={46}>
            <Track $top={0} />
            <Row $indent={29}>Part 1</Row>
          </List>
        </Panel>
      </Viewport>
      <BottomBar>
        <BottomTool $w={34}>
          <svg width="21" height="19" viewBox="0 0 21 19">
            <rect x="1" y="1" width="19" height="14" fill="none" stroke="#5a6672" strokeWidth="2" />
            <rect x="1" y="14" width="19" height="4" fill="#5a6672" />
            <rect x="12" y="15" width="3" height="2" fill="#c9c9c9" />
            <rect x="16" y="15" width="3" height="2" fill="#c9c9c9" />
          </svg>
        </BottomTool>
        <BottomTool $w={41}>
          <svg width="16" height="16" viewBox="0 0 16 16"><path d="M8 1v14M1 8h14" stroke="#6e6e6e" strokeWidth="4" /></svg>
        </BottomTool>
        <SheetTab $w={200} $active><PartGlyph />Side1and2</SheetTab>
        <SheetTab $w={199}><PartGlyph muted />Side3</SheetTab>
        <SheetTab $w={199}>
          <svg width="16" height="18" viewBox="0 0 16 18"><rect x="1" y="1" width="13" height="16" rx="2" fill="#fff" stroke="#444" /><rect x="4" y="3" width="10" height="11" fill="#888" /></svg>
          Assembly 1
        </SheetTab>
      </BottomBar>
    </Browser>
  </Screen>
);

export default App;
